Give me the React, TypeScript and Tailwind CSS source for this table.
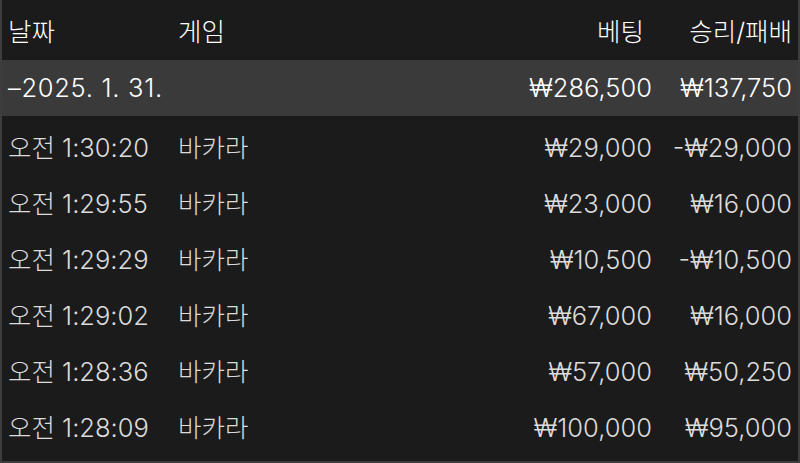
import React from "react";

const rows = [
  { t: "오전 1:30:20", g: "바카라", b: "₩29,000", w: "-₩29,000" },
  { t: "오전 1:29:55", g: "바카라", b: "₩23,000", w: "₩16,000" },
  { t: "오전 1:29:29", g: "바카라", b: "₩10,500", w: "-₩10,500" },
  { t: "오전 1:29:02", g: "바카라", b: "₩67,000", w: "₩16,000" },
  { t: "오전 1:28:36", g: "바카라", b: "₩57,000", w: "₩50,250" },
  { t: "오전 1:28:09", g: "바카라", b: "₩100,000", w: "₩95,000" },
];

export default function App() {
  return (
    <div
      className="w-[800px] h-[463px] bg-[#1b1b1b] border-x-2 border-b-2 border-[#3d3d3d] text-[25.5px] font-light overflow-hidden"
      style={{ fontFamily: 'Inter, "Noto Sans CJK KR", sans-serif' }}
    >
      <div className="flex items-center h-[60px] pl-[6px] pr-[6px] pt-[4px] text-white">
        <div className="w-[170px]">날짜</div>
        <div className="flex-1">게임</div>
        <div className="w-[160px] text-right pr-[8px]">베팅</div>
        <div className="w-[140px] text-right">승리/패배</div>
      </div>
      <div className="flex items-center h-[56px] pl-[6px] pr-[6px] bg-[#3a3a3a] text-white">
        <div className="w-[170px] whitespace-nowrap tracking-[0.7px]">–2025. 1. 31.</div>
        <div className="flex-1"></div>
        <div className="w-[160px] text-right">₩286,500</div>
        <div className="w-[140px] text-right">₩137,750</div>
      </div>
      <div className="pt-[4px]">
        {rows.map((r, i) => (
          <div key={i} className="flex items-center h-[56px] pl-[6px] pr-[6px] text-[#dcdcdc]">
            <div className="w-[170px] whitespace-nowrap">{r.t}</div>
            <div className="flex-1">{r.g}</div>
            <div className="w-[160px] text-right">{r.b}</div>
            <div className="w-[140px] text-right">{r.w}</div>
          </div>
        ))}
      </div>
    </div>
  );
}
